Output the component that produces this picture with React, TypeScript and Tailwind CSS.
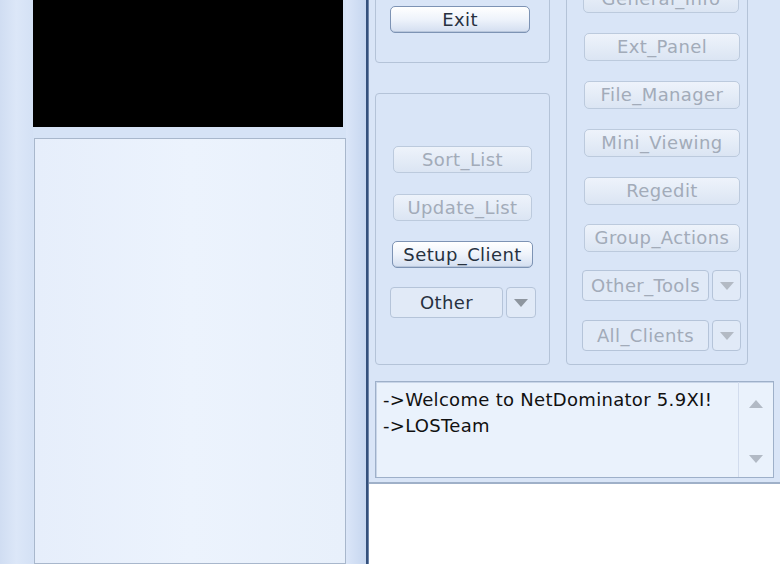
import React from "react";

const font = { fontFamily: '"DejaVu Sans", Verdana, sans-serif' };

function Btn({
  label,
  enabled = false,
  className = "",
}: {
  label: string;
  enabled?: boolean;
  className?: string;
}) {
  return (
    <div
      className={
        "flex items-center justify-center rounded-[5px] border text-[18px] leading-none tracking-[0.4px] " +
        (enabled
          ? "border-[#7d93b4] bg-gradient-to-b from-[#ffffff] via-[#eef3fb] to-[#d3def0] text-[#27313f] shadow-[inset_0_-1px_0_#b9c7dc]"
          : "border-[#bccadd] bg-gradient-to-b from-[#eef3fb] to-[#dbe5f3] text-[#a2abb9]") +
        " " +
        className
      }
    >
      {label}
    </div>
  );
}

function Arrow({ up = false, color = "#9ea6b2" }: { up?: boolean; color?: string }) {
  return (
    <svg width="14" height="8" viewBox="0 0 14 8">
      <path d={up ? "M0 8 L7 0 L14 8 Z" : "M0 0 L14 0 L7 8 Z"} fill={color} />
    </svg>
  );
}

function Split({
  label,
  enabled = false,
  mainW,
  dropW,
  className = "",
}: {
  label: string;
  enabled?: boolean;
  mainW: string;
  dropW: string;
  className?: string;
}) {
  return (
    <div className={"flex h-[31px] gap-[3px] " + className}>
      <div
        className={
          "flex items-center justify-center rounded-[4px] border border-[#b5c4d9] bg-[#e1eaf7] text-[18px] leading-none tracking-[0.4px] " +
          (enabled ? "text-[#27313f]" : "text-[#a2abb9]") +
          " " +
          mainW
        }
      >
        {label}
      </div>
      <div
        className={
          "flex items-center justify-center rounded-[4px] border border-[#b5c4d9] bg-[#e1eaf7] " +
          dropW
        }
      >
        <Arrow color={enabled ? "#8e969f" : "#b3bac4"} />
      </div>
    </div>
  );
}

export default function App() {
  return (
    <div
      className="flex h-[564px] w-[780px] overflow-hidden bg-[#d6e3f6]"
      style={font}
    >
      {/* left side */}
      <div className="flex h-full w-[366px]">
        <div className="h-full w-[33px] bg-gradient-to-r from-[#d0ddf2] via-[#dce7f8] to-[#d4e1f5]" />
        <div className="flex w-[313px] flex-col">
          <div className="h-[127px] w-[310px] bg-black" />
          <div className="ml-[1px] mt-[11px] w-[312px] flex-1 border border-[#a8b7cc] bg-gradient-to-r from-[#e6eefb] via-[#ecf3fd] to-[#e8f0fb]" />
        </div>
        <div className="h-full flex-1 bg-gradient-to-r from-[#dbe6f8] to-[#c6d6ef]" />
      </div>

      <div className="h-full w-[3px] border-r border-[#6d84a8] bg-[#34507b]" />

      {/* right side */}
      <div className="flex flex-1 flex-col">
        <div className="h-[484px] border-b-[2px] border-[#9fb0c8] bg-[#d9e5f7]">
          <div className="-mt-[20px] flex gap-[16px] pl-[6px]">
            <div className="flex w-[175px] flex-col gap-[30px]">
              <div className="h-[83px] rounded-[4px] border border-[#b4c3d8] pl-[14px] pt-[25px]">
                <Btn label="Exit" enabled className="h-[27px] w-[140px]" />
              </div>
              <div className="flex h-[272px] flex-col rounded-[4px] border border-[#b4c3d8] pt-[52px]">
                <Btn label="Sort_List" className="ml-[17px] h-[27px] w-[139px]" />
                <Btn label="Update_List" className="ml-[17px] mt-[21px] h-[27px] w-[139px]" />
                <Btn label="Setup_Client" enabled className="ml-[16px] mt-[20px] h-[27px] w-[141px]" />
                <Split
                  label="Other"
                  enabled
                  mainW="w-[113px]"
                  dropW="w-[30px]"
                  className="ml-[14px] mt-[19px]"
                />
              </div>
            </div>

            <div className="flex h-[385px] w-[182px] flex-col rounded-[4px] border border-[#b4c3d8] pt-[4px]">
              <Btn label="General_Info" className="ml-[16px] h-[28px] w-[156px]" />
              <Btn label="Ext_Panel" className="ml-[17px] mt-[20px] h-[28px] w-[156px]" />
              <Btn label="File_Manager" className="ml-[17px] mt-[20px] h-[28px] w-[156px]" />
              <Btn label="Mini_Viewing" className="ml-[17px] mt-[20px] h-[28px] w-[156px]" />
              <Btn label="Regedit" className="ml-[17px] mt-[20px] h-[28px] w-[156px]" />
              <Btn label="Group_Actions" className="ml-[17px] mt-[19px] h-[28px] w-[156px]" />
              <Split
                label="Other_Tools"
                mainW="w-[127px]"
                dropW="w-[29px]"
                className="ml-[15px] mt-[18px]"
              />
              <Split
                label="All_Clients"
                mainW="w-[127px]"
                dropW="w-[29px]"
                className="ml-[15px] mt-[19px]"
              />
            </div>
          </div>

          <div className="ml-[6px] mt-[16px] flex h-[97px] w-[399px] border border-[#9eb0c9] bg-[#eaf2fc] shadow-[inset_1px_1px_0_#c8d5e8]">
            <div className="flex-1 pl-[7px] pt-[5px] text-[18px] leading-[26px] tracking-[0.3px] text-[#111]">
              <div>-&gt;Welcome to NetDominator 5.9XI!</div>
              <div>-&gt;LOSTeam</div>
            </div>
            <div className="flex w-[35px] flex-col items-center justify-between border-l border-[#d2dced] pb-[14px] pt-[18px]">
              <Arrow up color="#b2bac5" />
              <Arrow color="#b2bac5" />
            </div>
          </div>
        </div>
        <div className="flex-1 bg-white" />
      </div>
    </div>
  );
}
